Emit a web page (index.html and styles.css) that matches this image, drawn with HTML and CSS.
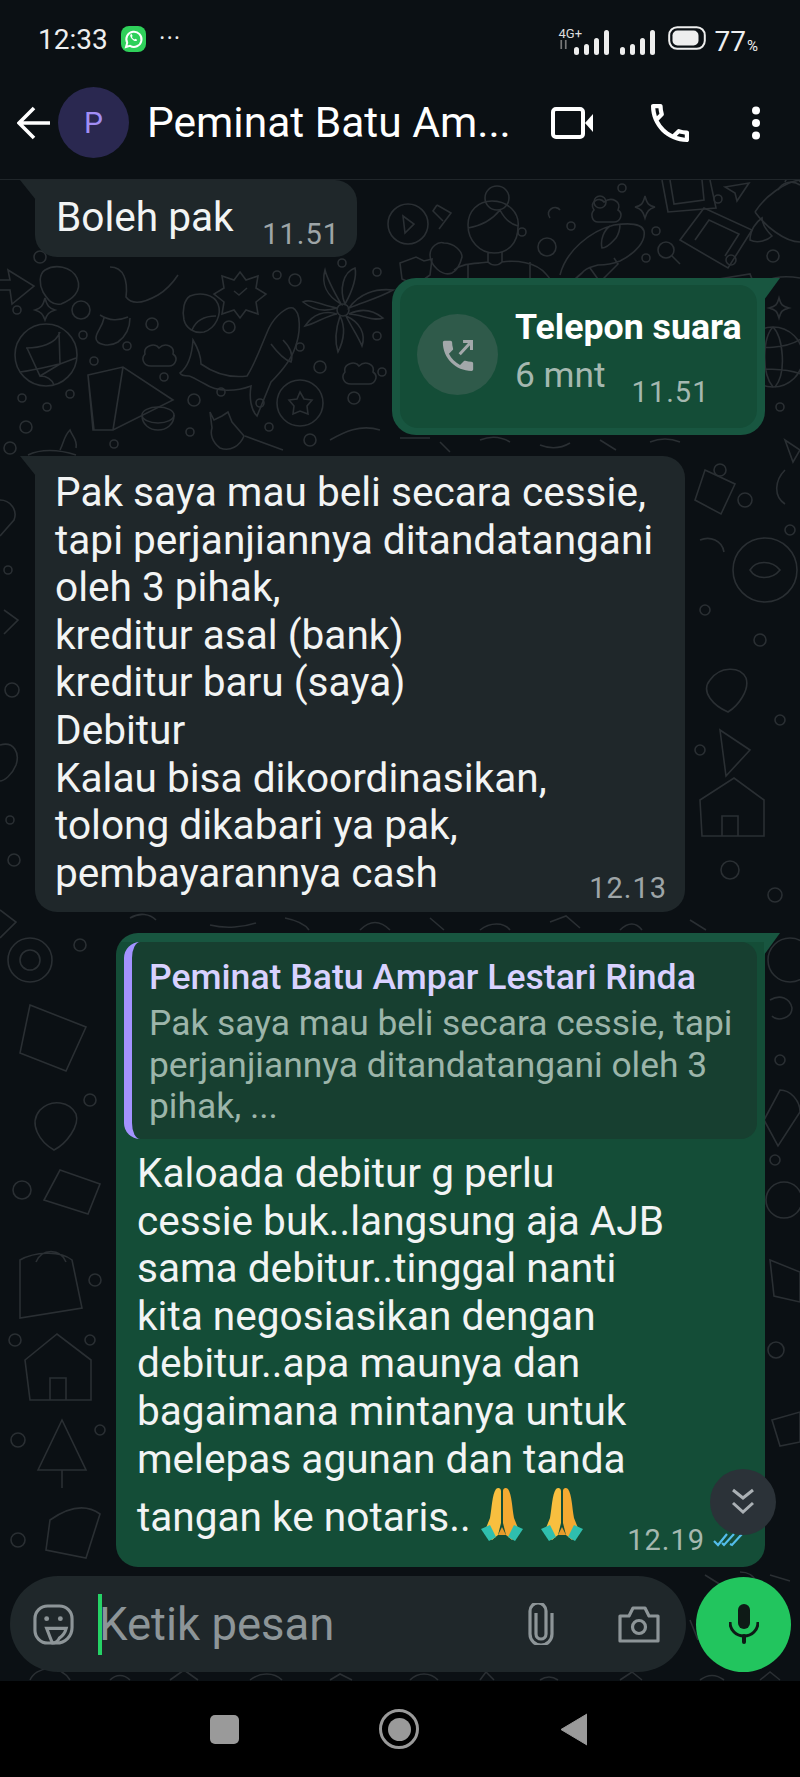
FILE: index.html
```html
<!DOCTYPE html>
<html lang="id">
<head>
    <meta charset="UTF-8">
    <meta name="viewport" content="width=device-width, initial-scale=1.0">
    <title>Peminat Batu Ampar Lestari Rinda</title>
    <link rel="stylesheet" href="styles.css">
</head>
<body>
    <div class="phone">
        <!-- Status bar -->
        <div class="statusbar">
            <span class="clock">12:33</span>
            <svg class="wa-icon" viewBox="0 0 25 26" width="25" height="26">
                <rect width="25" height="26" rx="8" fill="#2fd05a"/>
                <path d="M5 21l1.2-4.2A7.6 7.6 0 1 1 9 19.8z" fill="none" stroke="#fff" stroke-width="2"/>
                <path d="M9.5 8.5c-.8 1 0 3 1.700 4.700s3.600 2.400 4.500 1.500l.5-1-2-1-.8.7c-1-.4-2-1.500-2.500-2.500l.7-.8-1-2z" fill="#fff"/>
            </svg>
            <span class="more-dots">•••</span>
            <div class="status-right">
                <div class="net">
                    <span class="net-label">4G+</span>
                    <svg viewBox="0 0 8 8" width="9" height="9"><path d="M2 0v8M6 0v8" stroke="#777" stroke-width="1.500"/></svg>
                </div>
                <svg class="signal" viewBox="0 0 86 25" width="86" height="25" fill="#eee">
                    <rect x="0" y="17" width="5" height="8" rx="2.500"/>
                    <rect x="10" y="14" width="5" height="11" rx="2.500"/>
                    <rect x="20" y="8" width="5" height="17" rx="2.500"/>
                    <rect x="30" y="0" width="5" height="25" rx="2.500"/>
                    <rect x="46" y="17" width="5" height="8" rx="2.500"/>
                    <rect x="56" y="14" width="5" height="11" rx="2.500"/>
                    <rect x="66" y="8" width="5" height="17" rx="2.500"/>
                    <rect x="76" y="0" width="5" height="25" rx="2.500"/>
                </svg>
                <svg class="battery" viewBox="0 0 38 24" width="38" height="24">
                    <rect x="1.200" y="1.200" width="35.600" height="21.600" rx="8" fill="none" stroke="#eee" stroke-width="2"/>
                    <rect x="4.500" y="4.500" width="26" height="15" rx="5" fill="#eee"/>
                </svg>
                <span class="batt-num">77<small>%</small></span>
            </div>
        </div>

        <!-- App bar -->
        <header class="appbar">
            <svg class="back" viewBox="0 0 34 34" width="34" height="34"><path d="M33 17H3M17 2L2 17l15 15" fill="none" stroke="#fff" stroke-width="3.600"/></svg>
            <div class="avatar">P</div>
            <div class="title">Peminat Batu Am...</div>
            <svg class="act-video" viewBox="0 0 42 32" width="42" height="32"><rect x="2" y="2" width="30" height="28" rx="3" fill="none" stroke="#fff" stroke-width="4"/><path d="M34 16l8-9v18z" fill="#fff"/></svg>
            <svg class="act-call" viewBox="3 3 18 18" width="38" height="38"><path fill="#fff" d="M6.540 5c.06.89.21 1.760.45 2.590l-1.200 1.200c-.41-1.200-.67-2.470-.76-3.790h1.510m9.860 12.020c.85.24 1.720.39 2.600.45v1.490c-1.320-.09-2.590-.35-3.800-.75l1.200-1.190M7.500 3H4c-.55 0-1 .45-1 1 0 9.390 7.610 17 17 17 .55 0 1-.45 1-1v-3.490c0-.55-.45-1-1-1-1.240 0-2.450-.2-3.570-.57-.1-.04-.21-.05-.31-.05-.26 0-.51.1-.71.29l-2.200 2.200c-2.830-1.450-5.150-3.760-6.590-6.590l2.200-2.200c.28-.28.36-.67.25-1.020C8.700 6.450 8.500 5.250 8.500 4c0-.55-.45-1-1-1z"/></svg>
            <svg class="act-menu" viewBox="0 0 10 34" width="10" height="34" fill="#fff"><circle cx="5" cy="4.500" r="4"/><circle cx="5" cy="17" r="4"/><circle cx="5" cy="29.500" r="4"/></svg>
        </header>

        <!-- Chat -->
        <main class="chat">
            <svg class="wallpaper" viewBox="0 180 800 1501" width="800" height="1501">
                <g fill="none" stroke="#2a2f33" stroke-width="1.600">
                    <!-- whale -->
                    <path d="M180 373c8-6 12-18 13-33 6 10 8 18 8 24 14 10 30 14 46 12 8-12 14-30 22-48 6-12 18-22 24-20 8 4 8 24 2 40-4 12-14 24-24 34l-14 34c-6-6-8-18-6-30-16 6-34 6-46-2-8-4-14-8-16-8-2 0-8 0-9-3z"/>
                    <path d="M283 340c8 8 10 16 8 22-6-2-14-10-20-18"/>
                    <!-- flower -->
                    <circle cx="343" cy="310" r="6"/>
                    <path d="M345 304c8-14 12-28 10-36-12 4-16 22-10 36zM341 304c-8-14-14-26-16-34-4 14 2 26 16 34zM349 308c14-6 30-10 44-18-18-2-34 4-44 18zM337 308c-14-2-26-10-34-6 10 8 22 10 34 6zM349 314c12 0 24 8 34 4-10-8-22-10-34-4zM337 314c-12 2-22 10-32 12 8-12 20-16 32-12zM346 316c6 12 12 20 16 30 4-12-2-24-16-30zM340 316c-4 12-6 24-2 36 6-12 8-24 2-36z"/>
                    <!-- globe -->
                    <circle cx="46" cy="355" r="31"/>
                    <path d="M26 348c14 0 30-4 34-16M20 372c16-2 30-6 40-8l16-6M27 348l13 28 20-12-1-32M40 376c8 0 12 4 14 9"/>
                    <!-- tent and bowl -->
                    <path d="M88 375l35-8 50 33-60 30-20 0zM88 375l6 55M123 367l-10 63"/>
                    <ellipse cx="158" cy="415" rx="16" ry="8"/><path d="M142 415c0 10 8 15 16 15s16-5 16-15"/>
                    <!-- foot, heart, arrow, badge -->
                    <path d="M110 267c14 0 18 14 16 30 6 8 18 6 32-2 10-6 16-14 20-20M100 315c10 6 18 6 28 2M104 318c-2 10-8 14-8 20 0 6 12 10 22 4 8-6 12-14 12-24"/>
                    <path d="M45 270c10-6 26-4 32 8 6 14-6 22-16 26-10 2-14-6-18-12-4-8-4-18 2-22z"/>
                    <path d="M0 280h10l-2-10 26 16-22 18-2-14H0"/>
                    <path d="M240 272l6 8 12-4-2 12 10 6-10 8 2 12-12-4-6 8-6-8-12 4 2-12-10-8 10-6-2-12 12 4z"/>
                    <path d="M234 291l5 4 8-7"/>
                    <path d="M190 296c10-4 24-2 28 8 4 10-2 24-14 28-10 2-18-4-20-12-2-10 0-20 6-24zM192 330c4-10 12-14 24-14"/>
                    <path d="M45 298c2 8 4 10 10 12-6 2-8 4-10 10-2-6-4-8-10-10 6-2 8-4 10-12z"/>
                    <path d="M145 354c-2-8 10-12 14-6 6-6 16-2 14 6 6 4 2 12-4 12h-18c-8 0-10-8-6-12zM345 372c-2-8 10-12 14-6 6-6 16-2 14 6 6 4 2 12-4 12h-18c-8 0-10-8-6-12z"/>
                    <circle cx="300" cy="403" r="23"/>
                    <path d="M300 392l4 7 8 1-5 6 1 8-8-3-7 3 1-8-5-6 8-1z"/>
                    <path d="M210 412l4 8 8-4 6-4 4 10 12 14c-4 10-14 16-24 12-8-6-10-14-8-20zM245 436l38 14"/>
                    <path d="M60 450c4-8 4-14 10-20 2 6 8 10 6 18M28 455c12-6 30-6 48 0"/>
                    <path d="M330 440c14-8 30-16 50-10"/>
                    <circle cx="81" cy="310" r="9"/><circle cx="152" cy="324" r="6"/><circle cx="229" cy="327" r="6"/><circle cx="295" cy="280" r="6"/><circle cx="277" cy="275" r="4"/><circle cx="342" cy="263" r="4"/><circle cx="320" cy="367" r="6"/><circle cx="377" cy="272" r="4"/><circle cx="377" cy="336" r="4"/><circle cx="300" cy="347" r="4"/><circle cx="382" cy="372" r="4"/><circle cx="354" cy="398" r="6"/><circle cx="260" cy="403" r="4"/><circle cx="194" cy="400" r="6"/><circle cx="221" cy="392" r="4"/><circle cx="164" cy="377" r="4"/><circle cx="127" cy="346" r="4"/><circle cx="94" cy="361" r="4"/><circle cx="83" cy="335" r="4"/><circle cx="17" cy="310" r="4"/><circle cx="40" cy="257" r="6"/><circle cx="22" cy="398" r="4"/><circle cx="47" cy="407" r="4"/><circle cx="70" cy="394" r="4"/><circle cx="26" cy="427" r="6"/><circle cx="10" cy="448" r="6"/><circle cx="114" cy="444" r="4"/><circle cx="190" cy="432" r="4"/><circle cx="269" cy="427" r="4"/><circle cx="310" cy="440" r="6"/>
                    <!-- top of screen: play button, woman, koi, frames -->
                    <circle cx="408" cy="224" r="20"/><path d="M403 216l11 8-9 9z"/>
                    <path d="M437 205l14 8-12 16M437 205l-4 6 10 10"/>
                    <circle cx="497" cy="198" r="12"/>
                    <path d="M468 225c0-14 10-24 24-24 16 0 28 12 26 26 0 16-10 26-24 26s-26-12-26-28zM468 228c12-2 24-8 32-18 4 8 10 14 18 16M488 252v10c4 4 10 4 14 0v-10M454 270c10-8 24-6 34-8M502 262c14-2 34 0 44 12 4 4 6 10 6 14M468 265v44M530 262v44M470 290h60"/>
                    <path d="M430 255c0-8 8-14 14-12 10 0 18 8 18 14-2 8-6 14-10 16-10 4-22-8-22-18z"/>
                    <path d="M400 263l16-6 8 4 8-2-2 16-14 10-14-6z"/>
                    <path d="M560 275c6-24 30-44 54-50 14-2 28-2 30 6 2 10-8 22-24 30-10 4-16 4-22 4-6 2-12 2-16 8-8 6-16 14-18 28M610 226c-6 4-10 14-8 22 6 0 10-6 14-10 4-6 4-12 4-14M590 268l10 14 18-18-4-6"/>
                    <path d="M594 210c-6-8 6-14 10-8 8-6 18 0 14 8 6 4 2 12-4 12h-16c-6 0-8-8-4-12zM550 218c-6-8 6-14 10-8"/>
                    <circle cx="600" cy="202" r="6"/><circle cx="622" cy="188" r="4"/><circle cx="522" cy="232" r="4"/><circle cx="571" cy="226" r="4"/><circle cx="547" cy="247" r="9"/><circle cx="656" cy="231" r="4"/><circle cx="646" cy="258" r="4"/><circle cx="666" cy="250" r="8"/><path d="M672 256l8 8"/><circle cx="718" cy="199" r="4"/><circle cx="773" cy="256" r="6"/>
                    <path d="M645 196c2 8 4 10 10 11-6 2-8 4-10 11-2-7-4-9-10-11 6-1 8-3 10-11z"/>
                    <path d="M662 180l6 32 48-4-6-28M670 180l4 24 30-4-2-20"/>
                    <path d="M680 240l24-32 48 22-24 38zM695 240l14-20 30 14-14 22"/>
                    <path d="M700 282l50-8 12 30-50 0z"/>
                    <circle cx="731" cy="260" r="5"/>
                    <path d="M725 187l24-4-12 18-2-8z"/>
                    <path d="M755 212c10-16 30-30 45-32M755 212c10 14 30 30 45 30M750 240c0-10 6-18 12-22 0 8 6 14 10 18-4 4-14 8-22 4z"/>
                    <path d="M778 190a15 15 0 0 1 22-5M785 182a8 8 0 0 1 15 0"/>
                    <path d="M779 298c2 7 3 8 10 10-7 2-8 3-10 10-2-7-3-8-10-10 7-2 8-3 10-10z"/>
                    <circle cx="773" cy="357" r="30"/><path d="M745 345c16 4 40 4 56-6M745 372c14-4 40-4 56 2M773 327c-10 10-12 46 0 60M773 327c10 10 14 46 2 60"/>
                    <path d="M766 282c6-6 22-6 34-4"/>
                    <circle cx="780" cy="407" r="4"/>
                    <!-- right edge -->
                    <path d="M705 470l30 14-14 30-26-14zM700 540c10-4 22 0 24 12"/>
                    <path d="M785 440l8 22 7-12zM785 470c-10 10-12 26 0 34"/>
                    <circle cx="765" cy="570" r="32"/><path d="M750 570c6-10 22-10 30 0-8 10-24 10-30 0z"/>
                    <circle cx="745" cy="500" r="7"/><circle cx="720" cy="470" r="6"/><circle cx="760" cy="640" r="6"/><circle cx="705" cy="610" r="5"/><circle cx="790" cy="530" r="5"/>
                    <path d="M710 680c10-14 30-14 36-2 4 12-8 28-18 34-14-6-28-20-18-32zM720 730l30 20-24 26z"/>
                    <path d="M700 800l34-22 30 22v36h-62zM722 836v-20h16v20"/>
                    <circle cx="730" cy="870" r="9"/><circle cx="775" cy="895" r="7"/><circle cx="780" cy="720" r="5"/><circle cx="700" cy="750" r="5"/>
                    <circle cx="790" cy="960" r="22"/><path d="M770 1000c10-6 20-2 22 8 0 10-14 14-20 8"/>
                    <path d="M780 1090c10 0 20 10 20 22l-22 34-14-26z"/>
                    <circle cx="784" cy="1200" r="18"/><path d="M770 1260l30 12v30l-26-6z"/><circle cx="776" cy="1350" r="8"/><path d="M772 1420l28-8v30l-20 4z"/><circle cx="780" cy="1060" r="5"/><circle cx="775" cy="1160" r="5"/>
                    <!-- left edge -->
                    <path d="M0 500c10 0 18 10 14 20l-14 16M4 610l14 10-14 14"/>
                    <circle cx="12" cy="690" r="7"/><path d="M0 745c14-4 20 8 16 20-4 10-12 16-16 16"/>
                    <circle cx="14" cy="860" r="6"/><path d="M0 910l16 12-16 16"/><circle cx="8" cy="570" r="4"/><circle cx="10" cy="820" r="4"/>
                    <circle cx="30" cy="960" r="22"/><circle cx="30" cy="960" r="10"/>
                    <path d="M30 1005l56 22-20 44-46-18z"/>
                    <circle cx="80" cy="945" r="6"/><circle cx="90" cy="1100" r="6"/><path d="M40 1110c12-12 30-8 36 4 4 12-10 30-22 36-14-8-26-26-14-40z"/>
                    <path d="M60 1170l40 14-12 30-44-14z"/><circle cx="22" cy="1190" r="9"/>
                    <path d="M20 1260c14-8 40-10 52 0l10 48-62 10zM36 1262c6-14 24-14 30 0"/>
                    <circle cx="95" cy="1280" r="6"/><circle cx="15" cy="1340" r="6"/>
                    <path d="M25 1360l32-26 34 26v40H30zM50 1400v-22h16v22"/>
                    <circle cx="90" cy="1340" r="5"/>
                    <path d="M38 1470l24-50 24 50zM62 1470v18"/>
                    <circle cx="18" cy="1440" r="7"/><circle cx="100" cy="1430" r="5"/>
                    <path d="M50 1520c20-14 36-16 50-6l-14 44-40-8z"/>
                    <circle cx="18" cy="1540" r="7"/>
                    <!-- strips between bubbles -->
                    <path d="M130 918c10-6 20-4 26 2M210 925c16 4 34 2 46-2M285 918c10 2 20 6 24 12M360 930c10-10 20-10 30 0M430 918l14 12M480 930c10-8 24-8 30 0M550 922l16-6 14 12M620 930c8-8 16-8 22 0M690 920l16 10"/>
                    <path d="M400 438l30 0M440 442l10 10M480 440c10-4 20-4 30 2M540 445c10 4 20 4 30-2M600 440l16 10M650 442c10-4 20-4 30 0"/>
                    <path d="M30 1680c6-14 30-16 40 0M110 1680c6-6 14-6 20 0M170 1680l14-10 14 10M250 1680c10-8 24-8 32 0M330 1680l10-6 12 6M410 1680c8-8 20-8 28 0M480 1680l6-8 8 8M540 1680c6-4 12-4 18 0M620 1680l12-8 10 8M700 1680c8-6 16-6 24 0M760 1680l10-8 10 8"/>
                    <path d="M705 1575l16 10M740 1572c8 0 14 4 16 10M690 1620l8 20M770 1575l20 6"/>
                </g>
            </svg>

            <div class="messages">
                <div class="bubble in first">
                    <div class="row">
                        <span class="text">Boleh pak</span>
                        <span class="time">11.51</span>
                    </div>
                </div>

                <div class="bubble out call tail">
                    <div class="call-inner">
                        <div class="call-icon">
                            <svg viewBox="3 2 18 19" width="32" height="32"><path fill="#a3a8aa" d="M20 15.500c-1.250 0-2.450-.2-3.570-.57-.35-.11-.74-.03-1.020.24l-2.200 2.200c-2.830-1.440-5.150-3.750-6.590-6.580l2.200-2.210c.28-.27.36-.66.25-1.010C8.700 6.450 8.500 5.250 8.500 4c0-.55-.45-1-1-1H4c-.55 0-1 .45-1 1 0 9.390 7.610 17 17 17 .55 0 1-.45 1-1v-3.500c0-.55-.45-1-1-1z"/><path d="M13 11l6-6.500M15 3.500h5v5" fill="none" stroke="#a3a8aa" stroke-width="1.800"/></svg>
                        </div>
                        <div class="call-info">
                            <div class="call-title">Telepon suara</div>
                            <div class="row">
                                <span class="call-len">6 mnt</span>
                                <span class="time">11.51</span>
                            </div>
                        </div>
                    </div>
                </div>

                <div class="bubble in long tail">
                    <div class="text">Pak saya mau beli secara cessie,<br>tapi perjanjiannya ditandatangani<br>oleh 3 pihak,<br>kreditur asal (bank)<br>kreditur baru (saya)<br>Debitur<br>Kalau bisa dikoordinasikan,<br>tolong dikabari ya pak,<br>pembayarannya cash</div>
                    <div class="time">12.13</div>
                </div>

                <div class="bubble out reply tail">
                    <div class="quote">
                        <div class="quote-name">Peminat Batu Ampar Lestari Rinda</div>
                        <div class="quote-text">Pak saya mau beli secara cessie, tapi<br>perjanjiannya ditandatangani oleh 3<br>pihak, ...</div>
                    </div>
                    <div class="text">Kaloada debitur g perlu<br>cessie buk..langsung aja AJB<br>sama debitur..tinggal nanti<br>kita negosiasikan dengan<br>debitur..apa maunya dan<br>bagaimana mintanya untuk<br>melepas agunan dan tanda</div>
                    <div class="text last-line">tangan ke notaris..
                        <svg class="pray" viewBox="0 0 42 54"><use href="#pray"/></svg>
                        <svg class="pray" viewBox="0 0 42 54"><use href="#pray"/></svg>
                    </div>
                    <div class="meta">
                        <span class="time">12.19</span>
                        <svg viewBox="0 0 30 14" width="30" height="14"><path d="M1 8l4 4L14 1M9 10l2 2L21 1M17 11l2 1L29 1" fill="none" stroke="#53bdeb" stroke-width="2.200"/></svg>
                    </div>
                </div>
            </div>

            <button class="scroll-btn">
                <svg viewBox="0 0 24 28" width="24" height="28"><path d="M2 2l10 8 10-8M2 15l10 9 10-9" fill="none" stroke="#aab0b4" stroke-width="3"/></svg>
            </button>

            <!-- Input -->
            <div class="composer">
                <div class="input-box">
                    <svg class="ic-sticker" viewBox="0 0 42 42" width="41" height="41" fill="none" stroke="#8d9598" stroke-width="3.200">
                        <path d="M15 2h12a13 13 0 0 1 13 13v9c0 9-7 16-16 16h-9A13 13 0 0 1 2 27V15A13 13 0 0 1 15 2z"/>
                        <path d="M14 25h20c-1 4-4 8-7 10-1 2-3 5-7 5-2-4-4-10-6-15z"/>
                        <circle cx="14" cy="15" r="2.500" fill="#8d9598" stroke="none"/>
                        <circle cx="28" cy="15" r="2.500" fill="#8d9598" stroke="none"/>
                    </svg>
                    <span class="cursor"></span>
                    <span class="placeholder">Ketik pesan</span>
                    <svg class="ic-clip" viewBox="0 0 28 42" width="28" height="42" fill="none" stroke="#8d9598" stroke-width="3.200"><path d="M9 10v21a5 5 0 0 0 10 0V8A6.500 6.500 0 0 0 3 8v23a11 11 0 0 0 22 0V10"/></svg>
                    <svg class="ic-camera" viewBox="0 0 42 37" width="42" height="37" fill="none" stroke="#8d9598" stroke-width="3.200"><path d="M2 10h9l4-8h12l4 8h9v25H2z" stroke-linejoin="round"/><circle cx="21" cy="21" r="6.500"/></svg>
                </div>
                <div class="mic-btn">
                    <svg viewBox="0 0 30 40" width="30" height="40" fill="#0e1a16"><rect x="9" y="0" width="12" height="25" rx="6"/><path d="M1 18c0 8 6 14 14 14s14-6 14-14" fill="none" stroke="#0e1a16" stroke-width="3"/><rect x="13" y="30" width="4" height="10" rx="2"/></svg>
                </div>
            </div>
        </main>

        <!-- Navigation bar -->
        <nav class="navbar">
            <span class="nav-square"></span>
            <span class="nav-home"><span></span></span>
            <svg viewBox="0 0 27 33" width="27" height="33"><path d="M27 1v31L1 16.500z" fill="#9a9a9a" stroke="#9a9a9a" stroke-linejoin="round"/></svg>
        </nav>
    </div>

    <svg width="0" height="0" class="defs">
        <defs>
            <g id="pray">
                <path d="M3 46l6-15C11 20 11 8 15 2c2-2 5-1 5 2v32l-3 12-6 5z" fill="#f8bf3f"/>
                <path d="M39 46l-6-15C31 20 31 8 27 2c-2-2-5-1-5 2v32l3 12 6 5z" fill="#f4a931"/>
                <path d="M21 4v36l-4 8h8l-4-8z" fill="#e89a2a"/>
                <path d="M0 42l9-4 6 12-7 4z" fill="#2fbfae"/>
                <path d="M42 42l-9-4-6 12 7 4z" fill="#2fbfae"/>
            </g>
        </defs>
    </svg>
</body>
</html>
```

FILE: styles.css
```css
* {
    box-sizing: border-box;
    margin: 0;
    padding: 0;
    font-family: Roboto, "Liberation Sans", sans-serif;
}

body {
    background: #000;
    width: 800px;
    height: 1777px;
    overflow: hidden;
}

.defs {
    display: block;
}

.phone {
    width: 800px;
    height: 1777px;
    display: flex;
    flex-direction: column;
    background: #0b1014;
}

/* Status bar */
.statusbar {
    height: 74px;
    display: flex;
    align-items: flex-start;
    padding: 26px 42px 0 38px;
    color: #eee;
}

.clock {
    font-size: 28px;
    line-height: 28px;
    width: 83px;
}

.wa-icon {
    flex: none;
}

.more-dots {
    font-size: 13px;
    letter-spacing: 3px;
    line-height: 24px;
    margin-left: 14px;
}

.status-right {
    margin-left: auto;
    display: flex;
    align-items: flex-start;
}

.net {
    width: 28px;
    line-height: 0;
}

.net-label {
    display: block;
    font-size: 13px;
    line-height: 13px;
    margin-top: 1px;
    color: #ddd;
}

.signal {
    margin: 4px 0 0 -13px;
}

.battery {
    margin: 0 0 0 8px;
}

.batt-num {
    font-size: 28px;
    line-height: 28px;
    margin-left: 9px;
    margin-top: 2px;
}

.batt-num small {
    font-size: 15px;
    margin-left: 1px;
}

/* App bar */
.appbar {
    height: 106px;
    flex: none;
    display: flex;
    align-items: center;
    padding: 0 0 8px 17px;
    border-bottom: 1px solid #20262a;
}

.avatar {
    width: 71px;
    height: 71px;
    border-radius: 50%;
    background: #2a2850;
    color: #a28ef5;
    font-size: 30px;
    display: flex;
    align-items: center;
    justify-content: center;
    margin-left: 7px;
    flex: none;
}

.title {
    color: #fff;
    font-size: 42.500px;
    margin-left: 18px;
    width: 404px;
    white-space: nowrap;
}

.act-call {
    margin-left: 58px;
}

.act-menu {
    margin-left: 62px;
}

/* Chat */
.chat {
    position: relative;
    height: 1501px;
    flex: none;
    display: flex;
    flex-direction: column;
    overflow: hidden;
}

.wallpaper {
    position: absolute;
    top: 0;
    left: 0;
}

.messages {
    position: relative;
    flex: 1;
    display: flex;
    flex-direction: column;
    align-items: flex-start;
}

.bubble {
    position: relative;
    border-radius: 22px;
}

.bubble.in {
    background: #1f272a;
    margin-left: 35px;
}

.bubble.out {
    background: #144d37;
    margin-left: auto;
    margin-right: 35px;
}

.bubble.in.tail,
.bubble.first {
    border-top-left-radius: 0;
}

.bubble.out.tail {
    border-top-right-radius: 0;
}

.bubble.in.tail::before,
.bubble.first::before {
    content: "";
    position: absolute;
    top: 0;
    left: -15px;
    width: 16px;
    height: 20px;
    background: #1f272a;
    clip-path: polygon(0 0, 100% 0, 100% 100%);
}

.bubble.out.tail::before {
    content: "";
    position: absolute;
    top: 0;
    right: -15px;
    width: 16px;
    height: 22px;
    background: #185640;
    clip-path: polygon(0 0, 100% 0, 0 100%);
}

.text {
    color: #f2f4f4;
    font-size: 40.600px;
    line-height: 47.600px;
}

.time {
    color: #9ea5a7;
    font-size: 29px;
    letter-spacing: 1px;
    line-height: 30px;
}

.row {
    display: flex;
    justify-content: space-between;
    align-items: flex-end;
}

.first {
    width: 322px;
    height: 77px;
    padding: 14px 17px 0 21px;
}

.first .time {
    margin-bottom: -7px;
}

/* Call bubble */
.call {
    width: 373px;
    height: 157px;
    margin-top: 21px;
    padding: 7px 8px;
    background: #185640 !important;
    border-radius: 24px;
}

.call-inner {
    height: 100%;
    background: #144d37;
    border-radius: 18px;
    display: flex;
    padding: 29px 0 0 17px;
}

.call-icon {
    width: 81px;
    height: 81px;
    border-radius: 50%;
    background: #2f5a4a;
    display: flex;
    align-items: center;
    justify-content: center;
    flex: none;
}

.call-info {
    margin-left: 17px;
    width: 225px;
}

.call-title {
    color: #fff;
    font-size: 35.700px;
    font-weight: 700;
    line-height: 40px;
    margin-top: -24px;
    position: relative;
    top: 17px;
    white-space: nowrap;
}

.call-info .row {
    justify-content: flex-start;
    margin-top: 25px;
}

.call-len {
    color: #a5b8b0;
    font-size: 35.300px;
    line-height: 40px;
}

.call .time {
    color: #a5b8b0;
    margin-left: 26px;
    margin-bottom: -12px;
}

/* Long incoming message */
.long {
    width: 650px;
    height: 456px;
    margin-top: 21px;
    padding: 13px 18px 0 20px;
}

.long .time {
    text-align: right;
    margin-top: -24px;
}

/* Reply bubble */
.reply {
    width: 649px;
    height: 634px;
    margin-top: 21px;
    padding: 9px 8px 0 8px;
}

.reply.tail {
    background: linear-gradient(#185640 0 9px, #144d37 9px);
}

.quote {
    height: 197px;
    background: #173f30;
    border-left: 8px solid #a393ff;
    border-radius: 16px;
    padding: 14px 0 0 17px;
}

.quote-name {
    color: #d9d2ff;
    font-size: 35.600px;
    font-weight: 500;
    line-height: 42px;
    white-space: nowrap;
}

.quote-text {
    color: #9cb5aa;
    font-size: 35.400px;
    line-height: 41.700px;
    margin-top: 5px;
    white-space: nowrap;
}

.reply > .text {
    padding-left: 13px;
    margin-top: 11px;
}

.reply > .last-line {
    margin-top: 2px;
    padding-top: 6px;
    display: flex;
    align-items: center;
    gap: 18px;
    height: 60px;
    white-space: nowrap;
}

.pray {
    width: 42px;
    height: 54px;
    margin-top: -8px;
}

.pray:first-of-type {
    margin-left: -8px;
}

.meta {
    display: flex;
    align-items: center;
    justify-content: flex-end;
    gap: 8px;
    margin: -20px 14px 0 0;
}

.meta .time {
    color: #a5b8b0;
}

/* Scroll button */
.scroll-btn {
    position: absolute;
    left: 710px;
    top: 1289px;
    width: 66px;
    height: 66px;
    border: none;
    border-radius: 50%;
    background: #2b3238;
    display: flex;
    align-items: center;
    justify-content: center;
}

/* Composer */
.composer {
    position: relative;
    display: flex;
    align-items: center;
    padding: 0 9px 9px 10px;
    margin-top: 8px;
}

.input-box {
    width: 676px;
    height: 96px;
    border-radius: 48px;
    background: #1f272a;
    display: flex;
    align-items: center;
    padding-left: 23px;
}

.cursor {
    width: 4px;
    height: 61px;
    background: #25d366;
    margin-left: 24px;
}

.placeholder {
    color: #8d9598;
    font-size: 45.500px;
    margin-left: -3px;
    width: 428px;
}

.ic-camera {
    margin-left: 63px;
}

.mic-btn {
    width: 95px;
    height: 95px;
    border-radius: 50%;
    background: #22c55e;
    margin-left: auto;
    display: flex;
    align-items: center;
    justify-content: center;
}

/* Navigation bar */
.navbar {
    flex: 1;
    background: #000;
    display: flex;
    align-items: center;
    padding: 0 0 0 210px;
}

.nav-square {
    width: 29px;
    height: 29px;
    border-radius: 5px;
    background: #9a9a9a;
}

.nav-home {
    width: 40px;
    height: 40px;
    border: 3px solid #9a9a9a;
    border-radius: 50%;
    margin: 0 141px 0 140px;
    display: flex;
    align-items: center;
    justify-content: center;
}

.nav-home span {
    width: 23px;
    height: 23px;
    border-radius: 50%;
    background: #9a9a9a;
}
```
